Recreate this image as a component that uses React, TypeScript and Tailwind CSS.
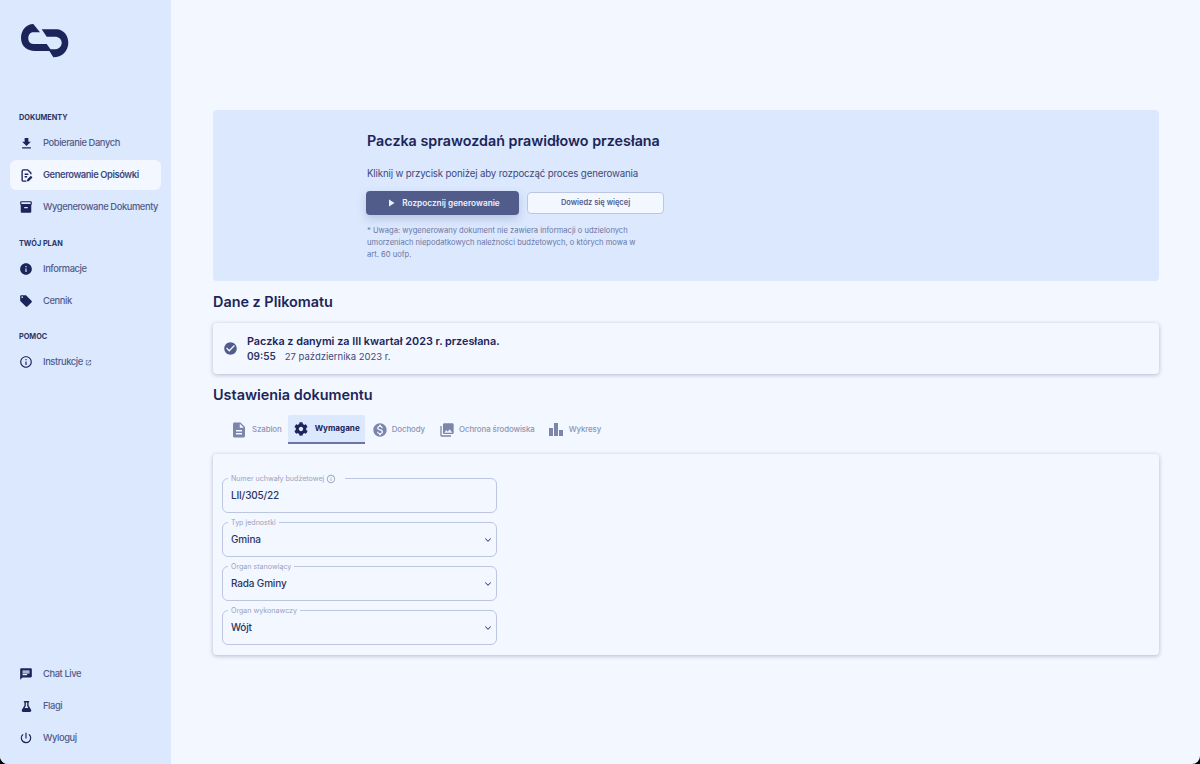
import React from 'react';
import { ChevronDown } from 'lucide-react';
import { FaCog, FaFlask } from 'react-icons/fa';
import {
  MdChat,
  MdCheckCircle,
  MdDescription,
  MdFileDownload,
  MdInfo,
  MdInfoOutline,
  MdInventory2,
  MdLocalOffer,
  MdMonetizationOn,
  MdOpenInNew,
  MdPhotoLibrary,
  MdPlayArrow,
  MdPowerSettingsNew,
} from 'react-icons/md';

const FONT = "font-['Inter','Liberation_Sans',sans-serif]";

const EditDocIcon = () => (
  <svg viewBox="0 0 24 24" className="w-[15px] h-[15px] shrink-0" fill="none" stroke="currentColor" strokeWidth="2.2">
    <path d="M12 21H7a2 2 0 0 1-2-2V5a2 2 0 0 1 2-2h7l5 5v2" strokeLinejoin="round" />
    <path d="M9 10h6M9 14h4" />
    <path d="M13 21v-2.5l6-6 2.5 2.500-6 6z" fill="currentColor" stroke="none" />
  </svg>
);

const Logo = () => (
  <svg viewBox="0 0 49 35" className="w-[49px] h-[35px]" fill="#1b2559">
    <path d="M13.300 1C6 1 1 7.500 1 15C1 23 7 28 15 28H31.700L26.700 21H13.300C10 21 8.300 18.500 8.300 15.300C8.300 12 10 9.300 13.300 9.300H20Z" />
    <path d="M21.700 6.300H36.700C43.500 6.500 48.300 12.500 48.300 19.700C48.300 28 42 34.300 33.300 34.300L28.300 26.300H35C38.500 26.300 41.700 23.500 41.700 19.700C41.700 16 38.500 13.700 35 13.700H26.700Z" />
  </svg>
);

const BarsIcon = () => (
  <svg viewBox="0 0 14 13" className="w-[14px] h-[13px]" fill="currentColor">
    <rect x="0" y="5" width="4" height="8" />
    <rect x="5" y="0" width="4" height="13" />
    <rect x="10" y="7" width="4" height="6" />
  </svg>
);

interface NavItemProps {
  icon: React.ReactNode;
  label: string;
  active?: boolean;
  extra?: React.ReactNode;
}

const NavItem: React.FC<NavItemProps> = ({ icon, label, active, extra }) => (
  <div className={`mx-[10px] h-[30px] mb-[2px] px-[9px] flex items-center rounded-md ${active ? 'bg-[#f3f7ff]' : ''}`}>
    <span className="w-[14px] flex justify-center text-[#1b2559] text-[14px]">{icon}</span>
    <span
      className={`ml-[10px] whitespace-nowrap text-[9.400px] tracking-[-0.42px] ${
        active ? 'font-semibold text-[#3e4a7d]' : 'font-medium text-[#525c8a]'
      }`}
    >
      {label}
    </span>
    {extra}
  </div>
);

const SectionLabel = ({ children, className = '' }: { children: React.ReactNode; className?: string }) => (
  <div className={`pl-[19px] h-[14px] mb-[3px] flex items-center text-[7.300px] font-bold text-[#2c3563] ${className}`}>
    {children}
  </div>
);

const Sidebar = () => (
  <aside className="w-[171px] h-full shrink-0 bg-[#dbe8fe] rounded-bl-[8px] flex flex-col justify-between pb-[9px]">
    <div>
      <div className="pl-[20px] pt-[23px]">
        <Logo />
      </div>
      <SectionLabel className="mt-[53px]">DOKUMENTY</SectionLabel>
      <NavItem icon={<MdFileDownload className="text-[15px] shrink-0" />} label="Pobieranie Danych" />
      <NavItem icon={<EditDocIcon />} label="Generowanie Opisówki" active />
      <NavItem icon={<MdInventory2 />} label="Wygenerowane Dokumenty" />
      <SectionLabel className="mt-[15px]">TWÓJ PLAN</SectionLabel>
      <NavItem icon={<MdInfo />} label="Informacje" />
      <NavItem icon={<MdLocalOffer />} label="Cennik" />
      <SectionLabel className="mt-[14px]">POMOC</SectionLabel>
      <NavItem
        icon={<MdInfoOutline />}
        label="Instrukcje"
        extra={<MdOpenInNew className="ml-[2px] w-[7px] h-[7px] text-[#525c8a]" />}
      />
    </div>
    <div>
      <NavItem icon={<MdChat />} label="Chat Live" />
      <NavItem icon={<FaFlask className="w-[11px] h-[11px]" />} label="Flagi" />
      <NavItem icon={<MdPowerSettingsNew />} label="Wyloguj" />
    </div>
  </aside>
);

interface TabProps {
  icon: React.ReactNode;
  label: string;
  active?: boolean;
  className?: string;
}

const Tab: React.FC<TabProps> = ({ icon, label, active, className = '' }) => (
  <div
    className={`h-[29px] flex items-center rounded-t-[2px] ${className} ${
      active ? 'bg-[#dbe8fe] border-b-2 border-[#6b76a3] text-[#1b2559]' : 'text-[#8d95b5]'
    }`}
  >
    <span className={active ? 'text-[#1b2559]' : 'text-[#7c85aa]'}>{icon}</span>
    <span className={`whitespace-nowrap ${active ? 'text-[8.100px] font-bold' : 'text-[7.900px] tracking-[-0.1px] font-medium'}`}>
      {label}
    </span>
  </div>
);

interface FieldProps {
  label: string;
  value: string;
  select?: boolean;
  extra?: React.ReactNode;
}

const Field: React.FC<FieldProps> = ({ label, value, select, extra }) => (
  <div className="relative w-[275px] h-[35px] rounded-[6px] border border-[#bcc6e0] flex items-center justify-between pl-[8px] pr-[3px]">
    <div className="absolute left-[5px] -top-[5px] px-[3px] h-[9px] bg-[#f3f7ff] flex items-center gap-[2px] text-[7.100px] leading-none text-[#9aa2c0] whitespace-nowrap">
      {label}
      {extra}
      {extra && <span className="w-[4px]" />}
    </div>
    <span className="text-[10px] tracking-[-0.16px] text-[#2c3563] font-medium">{value}</span>
    {select && <ChevronDown className="w-[10px] h-[10px] text-[#3e4a7d]" strokeWidth={2.500} />}
  </div>
);

export default function App() {
  return (
    <div className={`${FONT} w-[1200px] h-[764px] bg-black overflow-hidden`}>
      <div className="flex h-full bg-[#f3f7ff] rounded-b-[8px]">
        <Sidebar />
        <main className="flex-1 pl-[42px] pr-[41px] pt-[110px]">
          <section className="h-[171px] bg-[#dbe8fe] rounded-[4px] pl-[153px] pt-[20px]">
            <h1 className="pl-[1px] text-[14.300px] leading-[22px] font-semibold text-[#1b2559]">Paczka sprawozdań prawidłowo przesłana</h1>
            <p className="pl-[1px] mt-[14px] text-[9.700px] tracking-[-0.16px] leading-[16px] text-[#3e4a7d]">
              Kliknij w przycisk poniżej aby rozpocząć proces generowania
            </p>
            <div className="mt-[9px] flex gap-[8px]">
              <button className="w-[153px] h-[24px] rounded-[4px] bg-[#525c8a] text-[#eaf0ff] text-[8.250px] font-semibold flex items-center justify-center gap-[5px] shadow-[0_4px_8px_rgba(82,92,138,0.25)]">
                <MdPlayArrow className="w-[12px] h-[12px]" />
                Rozpocznij generowanie
              </button>
              <button className="w-[137px] h-[22px] mt-[1px] rounded-[4px] bg-[#f3f7ff] border border-[#bcc6e0] text-[#525c8a] text-[7.500px] font-semibold">
                Dowiedz się więcej
              </button>
            </div>
            <p className="pl-[1px] mt-[10px] w-[278px] text-[7.600px] leading-[12px] text-[#6b76a3]">
              * Uwaga: wygenerowany dokument nie zawiera informacji o udzielonych umorzeniach niepodatkowych należności budżetowych, o których mowa w art. 60 uofp.
            </p>
          </section>

          <h2 className="mt-[12px] h-[18px] flex items-center text-[14.400px] font-semibold text-[#1b2559]">Dane z Plikomatu</h2>
          <section className="mt-[12px] h-[51px] rounded-[4px] bg-[#f3f7ff] shadow-[0_1px_4px_rgba(82,92,138,0.4)] flex items-center pl-[10px] gap-[9px]">
            <MdCheckCircle className="w-[15px] h-[15px] text-[#525c8a]" />
            <div>
              <div className="text-[10.800px] leading-[15px] font-semibold text-[#1b2559]">Paczka z danymi za III kwartał 2023 r. przesłana.</div>
              <div className="text-[9.500px] leading-[15px] text-[#3e4a7d]">
                <span className="text-[10px] font-semibold text-[#2c3563] mr-[9px]">09:55</span>
                27 października 2023 r.
              </div>
            </div>
          </section>

          <h2 className="mt-[12px] h-[18px] flex items-center text-[14.400px] font-semibold text-[#1b2559]">Ustawienia dokumentu</h2>
          <div className="mt-[11px] pl-[12px] flex items-end gap-[2px]">
            <Tab className="pl-[5px] pr-[4px]" icon={<MdDescription className="block w-[18px] h-[18px] mr-[4px]" />} label="Szablon" />
            <Tab className="pl-[6px] pr-[5px]" icon={<FaCog className="block w-[14px] h-[14px] mr-[7px]" />} label="Wymagane" active />
            <Tab className="pl-[5px] pr-[5px]" icon={<MdMonetizationOn className="block w-[16px] h-[16px] mr-[4px]" />} label="Dochody" />
            <Tab className="pl-[7px] pr-[5px]" icon={<MdPhotoLibrary className="block w-[16px] h-[16px] mr-[4px]" />} label="Ochrona środowiska" />
            <Tab className="pl-[7px] pr-[5px]" icon={<div className="mr-[6px]"><BarsIcon /></div>} label="Wykresy" />
          </div>

          <section className="mt-[10px] h-[201px] rounded-[4px] bg-[#f3f7ff] shadow-[0_1px_4px_rgba(82,92,138,0.4)] pl-[9px] pt-[24px] flex flex-col gap-[9px]">
            <Field label="Numer uchwały budżetowej" value="LII/305/22" extra={<MdInfoOutline className="w-[10px] h-[10px]" />} />
            <Field label="Typ jednostki" value="Gmina" select />
            <Field label="Organ stanowiący" value="Rada Gminy" select />
            <Field label="Organ wykonawczy" value="Wójt" select />
          </section>
        </main>
      </div>
    </div>
  );
}
